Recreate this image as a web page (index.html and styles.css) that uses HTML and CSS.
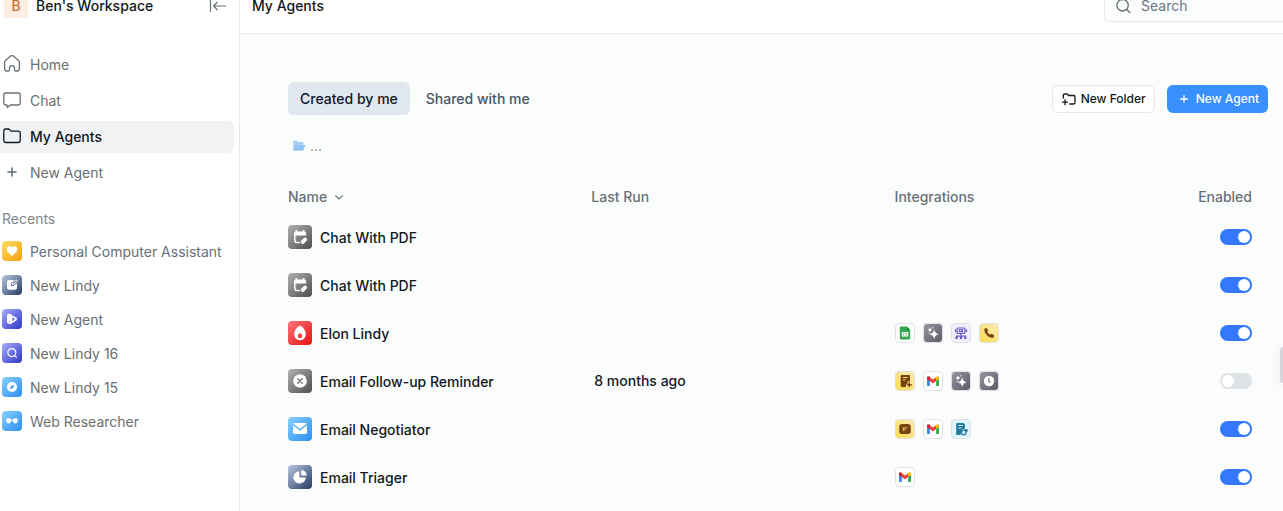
FILE: index.html
```html
<!DOCTYPE html>
<html lang="en">
<head>
<meta charset="utf-8">
<title>My Agents</title>
<link rel="stylesheet" href="styles.css">
</head>
<body>
<svg class="sprite" aria-hidden="true">
  <symbol id="calendar" viewBox="0 0 24 24"><path fill="#fff" d="M8.300 5c.6 0 1 .4 1 1v.5h5.400V6c0-.6.4-1 1-1s1 .4 1 1v.7c1 .4 1.500 1.200 1.500 2.300v1.600H6V9c0-1.100.5-1.900 1.300-2.300V6c0-.6.4-1 1-1z"/><path fill="none" stroke="#fff" stroke-width="1.500" d="M6.800 9.500v5.700q0 2.300 2.300 2.300h2.700"/><rect x="12.300" y="13.800" width="7.200" height="3.800" rx="1.700" transform="rotate(-42 15.900 15.700)" fill="#fff"/></symbol>
  <symbol id="gmail" viewBox="0 0 20 20"><path fill="#4285f4" d="M4 7v7.200c0 .5.400.900.900.900h2V8.500z"/><path fill="#34a853" d="M16 7v7.200c0 .5-.4.900-.9.900h-2V8.500z"/><path fill="#ea4335" d="M6.900 6.200L10 8.500l3.100-2.300v3.900L10 12.400l-3.100-2.300z"/><path fill="#c5221f" d="M4 6.600C4 5.100 5.500 4.800 6.300 5.500l.6.700v3.900L4 7.900z"/><path fill="#fbbc04" d="M16 6.600c0-1.500-1.500-1.800-2.300-1.100l-.6.700v3.900L16 7.900z"/></symbol>
  <symbol id="spark" viewBox="0 0 20 20"><path fill="#fff" d="M11.200 6.200q.6 4.300 4.800 5-4.200.7-4.800 5-.6-4.300-4.800-5 4.200-.7 4.800-5zM7 4.600q.4 2 2.400 2.400-2 .4-2.400 2.400-.4-2-2.400-2.400 2-.4 2.400-2.400z"/><circle cx="6.500" cy="10.500" r=".8" fill="#ddd"/><circle cx="9.800" cy="4.800" r=".8" fill="#ddd"/></symbol>
</svg>

<div class="app">
  <aside class="sidebar">
    <div class="workspace">
      <span class="badge">B</span>
      <span class="workspace-name">Ben's Workspace</span>
      <button class="collapse" aria-label="Collapse sidebar"><svg width="20" height="20" viewBox="0 0 20 20"><path d="M2.500 4v12M18 10H6M9.500 6L5.500 10l4 4"/></svg></button>
    </div>
    <nav class="nav">
      <a href="#"><svg class="line" viewBox="0 1 20 20"><path d="M2.600 8.500c0-1 .4-1.700 1.100-2.300l4.600-3.900c1-.8 2.400-.8 3.400 0l4.600 3.900c.7.6 1.100 1.300 1.100 2.300v6.300c0 1.400-.8 2.200-2.200 2.200h-1.400c-.8 0-1.300-.5-1.300-1.300v-1.600c0-1.500-1-2.500-2.500-2.500s-2.500 1-2.500 2.500v1.600c0 .8-.5 1.300-1.300 1.300H4.800c-1.400 0-2.200-.8-2.200-2.200z"/></svg>Home</a>
      <a href="#"><svg class="line" viewBox="0 1 20 20"><path d="M4 3h12c1.300 0 2.200.9 2.200 2.200v7.600c0 1.300-.9 2.200-2.200 2.200H8.500L5.400 17.500 4.900 15H4c-1.300 0-2.200-.9-2.200-2.200V5.200C1.800 3.900 2.700 3 4 3z"/></svg>Chat</a>
      <a href="#" class="active" aria-current="page"><svg class="line" viewBox="0 1 20 20"><path d="M1.800 5c0-1.200.8-2 2-2h2.400c.6 0 1.200.3 1.600.8l.6.700c.4.400.9.600 1.500.6h6.300c1.200 0 2 .8 2 2v7.400c0 1.200-.8 2-2 2H3.800c-1.200 0-2-.8-2-2z"/></svg>My Agents</a>
      <a href="#"><svg class="line plus" viewBox="0 1 20 20"><path d="M10 6v8M6 10h8"/></svg>New Agent</a>
    </nav>
    <h2 class="recents-title">Recents</h2>
    <nav class="recents">
      <a href="#"><svg class="tile yellow" viewBox="0 0 20 20"><path fill="#fff" d="M10 15L6 11.200C3.600 8.800 5 5.300 7.600 5.300c1 0 1.900.4 2.400 1.100.5-.7 1.400-1.100 2.400-1.100 2.600 0 4 3.500 1.600 5.900z"/></svg>Personal Computer Assistant</a>
      <a href="#"><svg class="tile navy" viewBox="0 0 20 20"><path fill="#fff" d="M7 5h5L9 8.700V11h2.500L15 8v4.500c0 1.300-.8 2.300-2.300 2.300H7.200c-1.400 0-2.200-.9-2.200-2.200V7c0-1.200.8-2 2-2z"/><path d="M10.500 9.700l.5-2 2.600-2.600c.8-.8 2 .4 1.200 1.300l-2.500 2.600z" fill="none" stroke="#fff"/></svg>New Lindy</a>
      <a href="#"><svg class="tile indigo" viewBox="0 0 20 20"><path fill="#fff" fill-rule="evenodd" d="M5 6.500C5 5.500 5.700 5 6.500 5h2c.6 0 1 .3 1 .9L14 8.600c1.200.7 1.400 2 .2 2.800l-4.700 3.100C7.300 15.800 5 15 5 12.600zM10.500 8l-.3 4.300 2.800-2.100zM7 12.200v1h1v-1z"/></svg>New Agent</a>
      <a href="#"><svg class="tile indigo" viewBox="0 0 20 20"><g fill="none" stroke="#fff" stroke-width="1.200" stroke-linecap="round"><circle cx="9.800" cy="9.600" r="4"/><path d="M12.700 12.600l1.700 1.700"/></g></svg>New Lindy 16</a>
      <a href="#"><svg class="tile blue" viewBox="0 0 20 20"><circle cx="10" cy="10" r="5" fill="#fff"/><path fill="#3da7f7" d="M12.300 7.700L11 11l-3.300 1.300L9 9z"/></svg>New Lindy 15</a>
      <a href="#"><svg class="tile blue" viewBox="0 0 20 20"><path fill="#fff" d="M4.200 8.700c0-1 1-1.500 2.300-1.500 1.600 0 2.400.6 2.900 1.500h1.200c.5-.9 1.300-1.500 2.900-1.500 1.300 0 2.300.5 2.300 1.500 0 2.300-.9 3.800-2.400 3.800-1.400 0-2.300-1.200-2.600-2.700H9.200c-.3 1.500-1.200 2.700-2.600 2.700-1.500 0-2.400-1.500-2.400-3.800z"/></svg>Web Researcher</a>
    </nav>
  </aside>

  <main class="main">
    <header class="topbar">
      <h1>My Agents</h1>
      <label class="search"><svg class="line" viewBox="0 0 20 20"><circle cx="9.600" cy="9.300" r="5.700"/><path d="M13.800 13.500l3 3"/></svg><input type="search" placeholder="Search" aria-label="Search"></label>
    </header>
    <div class="content">
      <div class="toolbar">
        <div class="tabs">
          <button class="tab selected">Created by me</button>
          <button class="tab">Shared with me</button>
        </div>
        <div class="actions">
          <button class="btn outline"><svg viewBox="0 0 16 16"><path d="M2.300 7V4.300c0-.8.500-1.300 1.300-1.300h2.200c.4 0 .8.200 1 .5l.8 1h5c.8 0 1.400.6 1.400 1.400v5.700c0 .8-.6 1.400-1.400 1.400H8.700M4 8.700v5M1.500 11.200h5"/></svg>New Folder</button>
          <button class="btn primary"><svg viewBox="0 0 16 16"><path d="M8 4.700v6.600M4.700 8h6.600"/></svg>New Agent</button>
        </div>
      </div>
      <nav class="crumbs" aria-label="Folders"><a href="#"><svg width="14" height="12" viewBox="0 0 14 12"><path fill="#a6d0f6" d="M1 1.500C1 1 1.300.7 1.800.7h3l1.300 1.300h4.500c.5 0 .9.400.9.900V5H2.500L1 8.500z"/><path fill="#90c4f4" d="M3.500 5h9c.7 0 1 .5.700 1l-1.700 3.900c-.2.500-.6.800-1.200.8H1.800c-.7 0-1-.5-.7-1.100l1.500-4c.2-.4.500-.6.900-.6z"/></svg>...</a></nav>
      <table class="agents">
        <colgroup><col class="c-name"><col class="c-run"><col class="c-int"><col></colgroup>
        <thead><tr>
          <th><button class="sort">Name<svg width="12" height="12" viewBox="0 0 12 12"><path d="M2.300 4.300L6 8l3.700-3.700"/></svg></button></th>
          <th>Last Run</th><th>Integrations</th><th class="end">Enabled</th>
        </tr></thead>
        <tbody>
          <tr>
            <td><a href="#"><svg class="tile gray" viewBox="0 0 24 24"><use href="#calendar"/></svg>Chat With PDF</a></td><td></td><td></td>
            <td class="end"><input type="checkbox" class="switch" aria-label="Enable Chat With PDF" checked></td>
          </tr>
          <tr>
            <td><a href="#"><svg class="tile gray" viewBox="0 0 24 24"><use href="#calendar"/></svg>Chat With PDF</a></td><td></td><td></td>
            <td class="end"><input type="checkbox" class="switch" aria-label="Enable second Chat With PDF" checked></td>
          </tr>
          <tr>
            <td><a href="#"><svg class="tile red" viewBox="0 0 24 24"><path fill="#fff" fill-rule="evenodd" d="M12 4.800c1.600 0 5.800 4 5.800 8.200 0 3.600-2.300 6.200-5.800 6.200S6.200 16.600 6.200 13c0-4.200 4.200-8.200 5.800-8.200zM12 12c-1.400.9-2.200 1.900-2.200 3.100 0 1.300.9 2.200 2.200 2.200s2.200-.9 2.200-2.200c0-1.200-.8-2.200-2.200-3.100z"/></svg>Elon Lindy</a></td><td></td>
            <td><div class="ints">
              <svg class="chip" viewBox="1 1 18 18"><path fill="#34a853" d="M6 3.500h5.700l3.500 3.500v8.300c0 .7-.5 1.200-1.200 1.200H6c-.7 0-1.200-.5-1.200-1.200V4.700c0-.7.5-1.200 1.200-1.200z"/><path fill="#188038" d="M11.700 3.500L15.200 7h-3.500z"/><path fill="#fff" fill-rule="evenodd" d="M6.800 8.900h6.400v4.700H6.800zM7.800 9.900v.9h1.600v-.9zm2.600 0v.9H12v-.9zm-2.600 1.900v.8h1.600v-.8zm2.600 0v.8H12v-.8z"/></svg>
              <svg class="chip dark" viewBox="1 1 18 18"><use href="#spark" width="20" height="20"/></svg>
              <svg class="chip lilac" viewBox="1 1 18 18"><g fill="none" stroke="#6954c2" stroke-width="1.200"><rect x="6" y="5" width="8" height="5.500" rx="1"/><rect x="8.400" y="6.800" width="3.200" height="1.900"/><path d="M10 10.500v4M5.500 14.800v-1.600h9v1.600M4.500 6.500v2.500M15.500 6.500v2.500"/></g><path fill="#6954c2" d="M4.500 14h2.200v1.900H4.500zM8.900 14h2.200v1.900H8.900zM13.300 14h2.200v1.900h-2.200z"/></svg>
              <svg class="chip gold" viewBox="1 1 18 18"><path fill="#79430f" d="M5.500 6c.4-1 1.600-1.300 2.300-.5l1 1.300c.5.7.2 1.300-.4 1.900.3 1.300 1.600 2.500 3 2.900.7-.7 1.300-.8 2-.4l1.200.8c1 .7.800 1.900-.2 2.400-2 .8-4.300.1-6.200-1.800S5 8.200 5.500 6z"/></svg>
            </div></td>
            <td class="end"><input type="checkbox" class="switch" aria-label="Enable Elon Lindy" checked></td>
          </tr>
          <tr>
            <td><a href="#"><svg class="tile gray" viewBox="0 0 24 24"><circle cx="12" cy="12" r="6.800" fill="#fff"/><path d="M9.800 9.800l4.400 4.400M14.200 9.800l-4.400 4.400" stroke="#777" stroke-width="1.400" stroke-linecap="round"/></svg>Email Follow-up Reminder</a></td><td class="run">8 months ago</td>
            <td><div class="ints">
              <svg class="chip gold" viewBox="1 1 18 18"><path fill="#79430f" d="M7 4h7c.6 0 1 .4 1 1v5.500h-2.500V13H11v3H7c-.8 0-1.300-.6-1.300-1.300V5.300C5.700 4.500 6.200 4 7 4z"/><path stroke="#f6dd83" d="M8 6.500h4.500M8 8.800h2.500"/><path stroke="#79430f" stroke-width="1.400" d="M14.300 11.300v5M11.800 13.800h5"/></svg>
              <svg class="chip" viewBox="1 1 18 18"><use href="#gmail" width="20" height="20"/></svg>
              <svg class="chip dark" viewBox="1 1 18 18"><use href="#spark" width="20" height="20"/></svg>
              <svg class="chip dark" viewBox="1 1 18 18"><circle cx="10" cy="10" r="5.200" fill="#fff"/><path d="M9.800 7v3.300l1.600 1.300" fill="none" stroke="#77727f" stroke-width="1.200"/></svg>
            </div></td>
            <td class="end"><input type="checkbox" class="switch" aria-label="Enable Email Follow-up Reminder"></td>
          </tr>
          <tr>
            <td><a href="#"><svg class="tile blue" viewBox="0 0 24 24"><path fill="#fff" d="M6.800 6h10.400c.7 0 1.200.2 1.500.6L12 12 5.300 6.600C5.600 6.200 6.100 6 6.800 6z"/><path fill="#fff" d="M5 8.200l7 5.600 7-5.600v7.100c0 1.100-.7 1.700-1.800 1.700H6.800C5.700 17 5 16.400 5 15.300z"/></svg>Email Negotiator</a></td><td></td>
            <td><div class="ints">
              <svg class="chip gold" viewBox="1 1 18 18"><path fill="#79430f" d="M7.500 5h5C15 5 15.800 6 15.800 8v4.500c0 1.600-.8 2.500-2.500 2.500H6.700c-1.700 0-2.500-.9-2.500-2.500V8c0-2 .8-3 3.300-3z"/><path fill="none" stroke="#e5bd65" d="M7.800 8.800h4.400M8.300 10.700h2.500M8.300 8.800v3.400"/></svg>
              <svg class="chip" viewBox="1 1 18 18"><use href="#gmail" width="20" height="20"/></svg>
              <svg class="chip aqua" viewBox="1 1 18 18"><path fill="#237a9d" d="M6.500 4H12c1.200 0 2 .8 2 2v3.500l-3.500 1.500L9.500 16h-3c-.8 0-1.300-.6-1.300-1.300V5.300C5.200 4.500 5.700 4 6.500 4z"/><path stroke="#d9f3fc" d="M7.500 6.500h4.300M7.500 9h2.600"/><circle cx="12.700" cy="13.500" r="2.300" fill="#def5fd" stroke="#237a9d" stroke-width="1.300"/><path stroke="#237a9d" stroke-width="1.200" d="M14 10.800h2v2"/></svg>
            </div></td>
            <td class="end"><input type="checkbox" class="switch" aria-label="Enable Email Negotiator" checked></td>
          </tr>
          <tr>
            <td><a href="#"><svg class="tile navy" viewBox="0 0 24 24"><path fill="#fff" d="M11.300 6.200v6.200h6.400A6.200 6.200 0 1 1 11.300 6.200z"/><path fill="#fff" d="M13.300 5c3.100.2 5.300 2.300 5.500 5.600h-5.500z"/></svg>Email Triager</a></td><td></td>
            <td><div class="ints"><svg class="chip" viewBox="1 1 18 18"><use href="#gmail" width="20" height="20"/></svg></div></td>
            <td class="end"><input type="checkbox" class="switch" aria-label="Enable Email Triager" checked></td>
          </tr>
        </tbody>
      </table>
    </div>
  </main>
  <button class="drawer" aria-label="Open panel"></button>
</div>
</body>
</html>
```
FILE: styles.css
```css
* { box-sizing: border-box; }
body {
  margin: 0;
  overflow: hidden;
  background: #fbfdfd;
  color: #11181c;
  font: 14px/20px Inter, sans-serif;
}
button, input { font: inherit; color: inherit; }
button { border: 0; padding: 0; background: none; }
a { color: inherit; text-decoration: none; }
svg { flex: none; }
.sprite { display: none; }

/* The shell bleeds past the top and left window edges. */
.app {
  display: flex;
  min-height: calc(100vh + 22px);
  margin: -22px 0 0 -12px;
}

.sidebar {
  flex: none;
  width: 252px;
  padding: 0 5px 0 6px;
  background: #fff;
  border-right: 1px solid #e4e7eb;
}
.workspace {
  display: flex;
  align-items: center;
  gap: 8px;
  height: 56px;
  padding: 0 6px 0 10px;
  font-weight: 500;
}
.badge {
  width: 24px;
  border-radius: 4px;
  background: #fdeee1;
  color: #c8713a;
  line-height: 24px;
  text-align: center;
}
.workspace-name { flex: 1; }
.collapse svg {
  display: block;
  fill: none;
  stroke: #687076;
  stroke-width: 1.2;
}
.line {
  width: 20px;
  height: 20px;
  fill: none;
  stroke: currentColor;
  stroke-width: 1.3;
  stroke-linecap: round;
  stroke-linejoin: round;
}
.plus { stroke-width: 1.6; }
.nav, .recents { display: flex; flex-direction: column; }
.nav { gap: 4px; padding-top: 15px; }
.nav a, .recents a {
  display: flex;
  align-items: center;
  gap: 8px;
  height: 32px;
  padding: 0 8px;
  border-radius: 6px;
  color: #687076;
  white-space: nowrap;
}
.nav a.active { background: #f1f2f4; color: #11181c; font-weight: 500; }
.recents-title {
  margin: 20px 8px 7px;
  color: #7e868c;
  font-size: 14px;
  font-weight: 400;
}
.recents { gap: 2px; }

.tile { width: 20px; height: 20px; margin-bottom: 2px; border-radius: 4px; }
.yellow { background: linear-gradient(135deg, #ffdc66, #f5a00b); }
.navy { background: linear-gradient(135deg, #b9c8e4, #233a61); }
.indigo { background: linear-gradient(135deg, #aaaefc, #2c35c6); }
.blue { background: linear-gradient(135deg, #86d2ff, #2c8df2); }
.gray { background: linear-gradient(135deg, #b2b2b2, #4c4c4c); }
.red { background: linear-gradient(135deg, #ff767c, #e51212); }

.main { flex: 1; min-width: 0; overflow: hidden; }
.topbar {
  display: flex;
  align-items: center;
  justify-content: space-between;
  height: 56px;
  padding-left: 12px;
  background: #fff;
  border-bottom: 1px solid #e4e7eb;
}
.topbar h1 { margin: 0; font-size: 14px; font-weight: 500; line-height: 20px; }
.search {
  display: flex;
  align-items: center;
  gap: 8px;
  width: 200px;
  height: 32px;
  margin-right: -21px;
  padding: 0 8px;
  border: 1px solid #e4e7eb;
  border-radius: 4px;
  background: #fbfdfd;
  color: #687076;
}
.search input { width: 100%; border: 0; padding: 0; background: none; outline: 0; }
.search input::placeholder { color: #6b7280; }

.content { padding: 48px 15px 0 48px; }
.toolbar, .tabs, .actions, .ints { display: flex; align-items: center; }
.toolbar { justify-content: space-between; }
.tabs { gap: 4px; }
.tab {
  padding: 6px 12px;
  border-radius: 6px;
  color: #475569;
  font-weight: 500;
  line-height: 21px;
}
.selected { background: #e1e7ef; color: #0f172a; }
.actions { gap: 12px; }
.btn {
  display: flex;
  align-items: center;
  gap: 4px;
  height: 28px;
  padding: 0 8px;
  border: 1px solid transparent;
  border-radius: 6px;
  font-size: 12px;
  font-weight: 500;
}
.btn svg {
  width: 16px;
  height: 16px;
  fill: none;
  stroke: currentColor;
  stroke-width: 1.3;
  stroke-linecap: round;
}
.outline { border-color: #e4e7eb; background: #fff; }
.primary { background: #3890ff; color: #fff; }

.crumbs { padding: 21px 4px 25px; color: #7e868c; }
.crumbs a { display: flex; align-items: center; gap: 4px; }

.agents { width: 100%; table-layout: fixed; border-collapse: collapse; }
.c-name, .c-run { width: 30.95%; }
.c-int { width: 24%; }
.agents th, .agents td { padding: 0; text-align: left; font-weight: 500; white-space: nowrap; }
.agents th { height: 32px; color: #687076; }
.agents td { height: 48px; }
.agents .run { padding-left: 3px; }
.agents .end { padding-right: 16px; text-align: right; }
.sort { display: flex; align-items: center; gap: 6px; font-weight: 500; }
.sort svg { fill: none; stroke: currentColor; stroke-width: 1.2; }
.agents td a { display: flex; align-items: center; gap: 8px; padding-top: 2px; }
.agents .tile { width: 24px; height: 24px; }
.ints { gap: 8px; }
.chip {
  width: 20px;
  height: 20px;
  border: 1px solid #dfe2e7;
  border-radius: 4px;
  background: #fff;
}
.dark { background: linear-gradient(135deg, #9995a1, #5e5967); }
.lilac { background: #f1effe; }
.gold { background: linear-gradient(45deg, #fbdc4e, #fbecb9); }
.aqua { background: #def5fd; }

.switch {
  appearance: none;
  display: block;
  width: 32px;
  height: 16px;
  margin: 0 0 0 auto;
  padding: 2px;
  border-radius: 8px;
  background: #dfe2e6;
}
.switch::before {
  content: "";
  display: block;
  width: 12px;
  height: 12px;
  border-radius: 50%;
  background: #fff;
}
.switch:checked { background: #3478ff; }
.switch:checked::before { margin-left: auto; }

.drawer {
  position: absolute;
  top: 347px;
  right: 0;
  width: 3px;
  height: 36px;
  border-radius: 8px 0 0 8px;
  background: #d4d6dc;
  box-shadow: 0 2px 8px #0002;
}
```
